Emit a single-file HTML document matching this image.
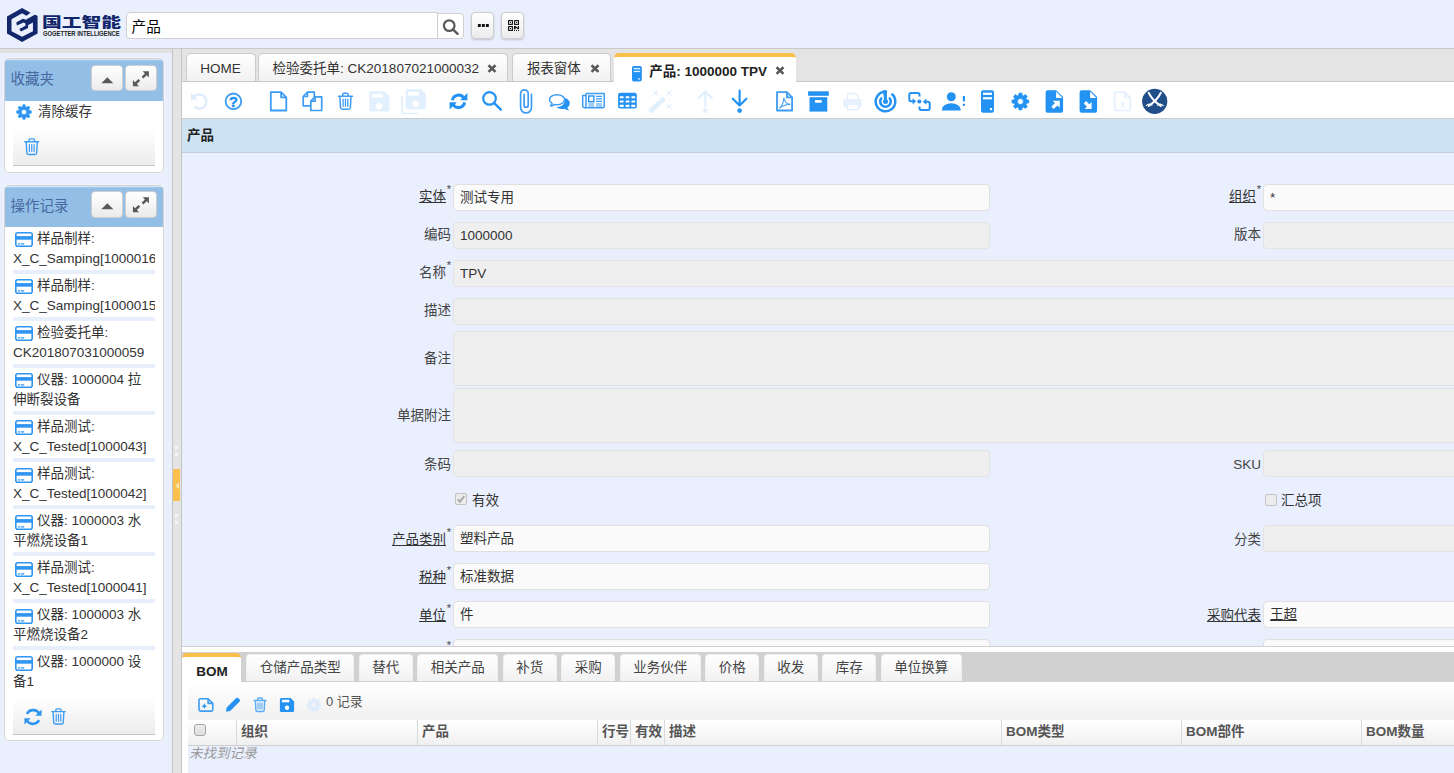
<!DOCTYPE html>
<html lang="zh-CN">
<head>
<meta charset="utf-8">
<title>产品: 1000000 TPV</title>
<style>
*{box-sizing:border-box;margin:0;padding:0}
html,body{width:1454px;height:773px;overflow:hidden}
body{position:relative;background:#e9effd;font-family:"Liberation Sans","Noto Sans CJK SC",sans-serif;font-size:13.5px;color:#333}
.abs{position:absolute}
svg{display:block;overflow:visible}
/* ---------- header ---------- */
#hdr{position:absolute;left:0;top:0;width:1454px;height:49px;background:#e9effd;border-bottom:1px solid #c9c9c9}
#logo{position:absolute;left:6px;top:7px}
#logotxt{position:absolute;left:41.6px;top:12.1px;font-weight:900;font-size:13.2px;line-height:20px;color:#12276b;white-space:nowrap;font-family:"Noto Sans CJK SC","Liberation Sans",sans-serif;transform:scaleX(1.5);transform-origin:0 0}
#logosub{position:absolute;left:43.4px;top:29.5px;font-weight:bold;font-size:7px;line-height:8px;color:#222;white-space:nowrap;transform:scaleX(.828);transform-origin:0 0}
#srch{position:absolute;left:126px;top:12px;width:312px;height:27px;background:#fff;border:1px solid #cfcfcf;border-radius:4px 0 0 4px;font-size:14.6px;line-height:28px;padding-left:4.6px;color:#000;overflow:hidden}
#srchbtn{position:absolute;left:437px;top:13px;width:27px;height:26px;background:#fff;border:1px solid #cfcfcf;border-radius:0 4px 4px 0}
.hbtn{position:absolute;top:12px;width:23.500px;height:27px;border:1px solid #cdcdcd;border-radius:4px;background:linear-gradient(#fff,#ebebeb);box-shadow:0 1px 2px rgba(0,0,0,.18)}
/* ---------- left column ---------- */
#lefttop{position:absolute;left:0;top:49px;width:172px;height:4px;background:#e1e1e1}
#split{position:absolute;left:172px;top:49px;width:9px;height:724px;background:#e4e4e4;border-left:1px solid #c4c4c4}
#splith{position:absolute;left:173px;top:468.7px;width:7px;height:32px;background:#fbc04c}
.panel{position:absolute;left:4px;width:160px;background:#fff;border:1px solid #d3d3d3;border-radius:5px;box-shadow:0 0 0 1px rgba(255,255,255,.3)}
.phead{position:absolute;left:0;top:.3px;width:158px;height:41.6px;background:linear-gradient(#eef4fb 0,#93bfe7 1.8px);border-radius:4px 4px 0 0}
.ptitle{position:absolute;left:5.6px;top:8.7px;font-size:14.5px;line-height:22px;color:#46689f;white-space:nowrap}
.pbtn{position:absolute;top:5.5px;width:31.5px;height:26.6px;border:1px solid #cfcfcf;border-radius:4px;background:linear-gradient(#fff,#ebebeb)}
.pfoot{position:absolute;left:8px;width:142px;height:37px;background:linear-gradient(#fff,#ececec);border-bottom:1px solid #c6c6c6}
.item{position:absolute;left:8px;width:142px;height:45.300px;font-size:13.500px;line-height:20px;color:#333;white-space:nowrap;overflow:hidden;border-bottom:4.800px solid #e7eefc}
.item svg{position:absolute;left:2px;top:3.7px}
.item span{padding-left:24px}
/* ---------- main ---------- */
#tabbar{position:absolute;left:181px;top:49px;width:1273px;height:33px;background:#e4e4e4;border-bottom:1px solid #c9c9c9}
.tab{position:absolute;top:4px;height:28px;border:1px solid #cbcbcb;border-bottom:none;border-radius:5px 5px 0 0;background:linear-gradient(#fff,#f1f1f1);font-size:13.5px;line-height:29px;padding-left:13px;white-space:nowrap;color:#333}
.tab .x{position:absolute;top:10.300px;right:9.800px}
.tab.act{top:4px;height:30px;border-radius:5px 5px 0 0;background:#fff;border:none;border-top:4.500px solid #fbc04c;font-weight:bold;line-height:29.500px;color:#222}
.tab.act .x{top:9.300px;right:10.900px}
#tb{position:absolute;left:182px;top:82px;width:1272px;height:37px;background:#fff;border-bottom:1px solid #cbcbcb}
#tb svg{position:absolute}
#ttl{position:absolute;left:182px;top:119px;width:1272px;height:34px;background:#cde3f4;border-bottom:1px solid #c2cfdb;font-weight:bold;font-size:13.5px;line-height:34px;padding-left:5px;color:#222}
#mainl{position:absolute;left:181px;top:49px;width:1px;height:724px;background:#c6c6c6}
#form{position:absolute;left:182px;top:153px;width:1272px;height:493px;background:#e9effd;overflow:hidden}
.lb{position:absolute;height:26px;line-height:26px;font-size:13.5px;color:#444;text-align:right;white-space:nowrap}
.lb u{text-decoration:underline;color:#333}
.lb sup{position:absolute;right:-5px;top:-8px;font-size:11px}
.in{position:absolute;height:27px;border:1px solid #e0e0e0;border-radius:4px;background:#fafafa;font-size:13.5px;line-height:25px;padding-left:6px;color:#333;white-space:nowrap}
.in.ro{background:#efefef;border-color:#e3e3e3}
.ck{position:absolute;width:12px;height:12px;border:1px solid #c4c4c4;border-radius:2px;background:#ececec}
.ckl{position:absolute;font-size:13.5px;line-height:20px;color:#333}
/* ---------- bottom ---------- */
#hs1{position:absolute;left:182px;top:646px;width:1272px;height:1.4px;background:#cfcfcf}
#hs2{position:absolute;left:182px;top:647.4px;width:1272px;height:4.6px;background:#fff}
#btabs{position:absolute;left:182px;top:652px;width:1272px;height:29.500px;background:#d1d1d1}
.bt{position:absolute;top:2px;height:26.600px;border:1px solid #f0f0f0;border-bottom:none;border-radius:4px 4px 0 0;background:linear-gradient(#fff,#f1f1f1);font-size:13.5px;line-height:26px;text-align:center;white-space:nowrap;color:#444}
.bt.act{top:.5px;height:31px;background:#fff;border:none;border-radius:5px 5px 0 0;border-top:4px solid #fbc04c;font-weight:bold;color:#222;line-height:30px}
#btb{position:absolute;left:182px;top:682px;width:1272px;height:37px;background:linear-gradient(#fff,#f0f0f0)}
#btb svg{position:absolute}
#ghead{position:absolute;left:188px;top:719px;width:1266px;height:27px;background:linear-gradient(#fff,#f0f0f0);border-bottom:1px solid #cfcfcf;border-top:1px solid #f3f3f3}
.gc{position:absolute;top:0;height:25px;border-left:1px solid #d9d9d9;font-weight:bold;font-size:13.5px;line-height:24px;padding-left:4px;color:#555;white-space:nowrap}
#gbody{position:absolute;left:188px;top:746px;width:1266px;height:27px;background:#e9effd;font-style:italic;font-size:13.5px;line-height:15px;color:#999;padding-left:1px}
#gleft{position:absolute;left:182px;top:682px;width:6px;height:91px;background:#fff}
</style>
</head>
<body>
<!-- HEADER -->
<div id="hdr">
  <svg id="logo" style="position:absolute;left:2px;top:4px" width="44" height="42" viewBox="0 0 810 773"><polygon fill="#12276b" points="525,160 370,72 92,230 92,545 370,700 655,545 655,215 600,200 440,290 385,272 262,340 275,398 395,340 432,360 432,400 318,462 350,505 480,440 482,388 570,340 570,500 370,605 175,500 175,280 370,170 450,215"/></svg>
  <div id="logotxt">国工智能</div>
  <div id="logosub">GOGETTER INTELLIGENCE</div>
  <div id="srch">产品</div>
  <div id="srchbtn"><svg width="25" height="24" viewBox="0 0 25 24" style="position:absolute;left:0;top:0"><circle cx="11.2" cy="11.6" r="5.3" fill="none" stroke="#595959" stroke-width="2.2"/><path d="M15.2 15.6L19.6 19.8" stroke="#595959" stroke-width="2.4" stroke-linecap="round"/></svg></div>
  <div class="hbtn" style="left:470.800px"><svg width="21" height="25" viewBox="0 0 21 25" style="position:absolute;left:0;top:0"><rect x="5.9" y="11" width="2.9" height="3" fill="#111"/><rect x="9.9" y="11" width="2.9" height="3" fill="#111"/><rect x="13.9" y="11" width="2.9" height="3" fill="#111"/></svg></div>
  <div class="hbtn" style="left:500.800px"><svg width="21" height="25" viewBox="0 0 21 25" style="position:absolute;left:0;top:0"><g fill="none" stroke="#111" stroke-width="1.1"><rect x="6.6" y="7.6" width="3.8" height="3.8"/><rect x="12.6" y="7.6" width="3.8" height="3.8"/><rect x="6.6" y="13.6" width="3.8" height="3.8"/></g><g fill="#111"><rect x="8" y="9" width="1" height="1"/><rect x="14" y="9" width="1" height="1"/><rect x="8" y="15" width="1" height="1"/><path d="M12 13h1.6l2.2 2V13H17v3.2h-1.3l-2-1.8v1.8H12zM12 17h1v1h-1zM14 17h1v1h-1zM16 17h1v1h-1z"/></g></svg></div>
</div>
<!-- LEFT -->
<div id="lefttop"></div>
<div id="split"></div><div id="splith"><svg width="7" height="32" viewBox="0 0 7 32"><path d="M6 13.200L2 16.700L6 20.200Z" fill="#fde3ac"/></svg></div>
<div class="abs" style="left:175.400px;top:446px;width:3px;height:10px;border-left:3px dotted #f4f4f4"></div><div class="abs" style="left:175.400px;top:514px;width:3px;height:10px;border-left:3px dotted #f4f4f4"></div>
<div class="panel" id="p1" style="top:58px;height:115px">
  <div class="phead"><div class="ptitle">收藏夹</div><div class="pbtn" style="left:86px"><svg width="30" height="25" viewBox="0 0 30 25" style="position:absolute;left:0;top:0"><path d="M9.300 17.200L15.300 11.200L21.300 17.200Z" fill="#595959"/></svg></div><div class="pbtn" style="left:120px"><svg width="30" height="25" viewBox="0 0 30 25" style="position:absolute;left:0;top:0"><g fill="#595959"><path d="M22.900 5.300v6.200l-2.200-2.200-3.300 3.300-1.800-1.800 3.300-3.300-2.200-2.200zM6.900 20.300v-6.200l2.200 2.200 3.300-3.300 1.800 1.800-3.300 3.300 2.200 2.200z"/></g></svg></div></div>
  <svg style="position:absolute;left:11px;top:44.7px" width="16" height="16" viewBox="0 0 16 16"><path fill="#2f95f1" fill-rule="evenodd" stroke="#2f95f1" stroke-width=".6" stroke-linejoin="round" d="M6.51 2.60 L6.81 0.70 L9.19 0.70 L9.49 2.60 L10.76 3.13 L12.32 1.99 L14.01 3.68 L12.87 5.24 L13.40 6.51 L15.30 6.81 L15.30 9.19 L13.40 9.49 L12.87 10.76 L14.01 12.32 L12.32 14.01 L10.76 12.87 L9.49 13.40 L9.19 15.30 L6.81 15.30 L6.51 13.40 L5.24 12.87 L3.68 14.01 L1.99 12.32 L3.13 10.76 L2.60 9.49 L0.70 9.19 L0.70 6.81 L2.60 6.51 L3.13 5.24 L1.99 3.68 L3.68 1.99 L5.24 3.13Z M5.40 8.00 a2.60 2.60 0 1 0 5.20 0 a2.60 2.60 0 1 0 -5.20 0Z"/></svg>
  <div class="abs" style="left:33px;top:42.7px;font-size:13.5px;line-height:20px;color:#333;white-space:nowrap">清除缓存</div>
  <div class="pfoot" style="top:70px"><svg style="position:absolute;left:10.8px;top:8.5px" width="15.5" height="17.5" viewBox="0 0 15.5 17.5"><g fill="none" stroke="#3d9cf3" stroke-width="1.4" stroke-linecap="round" stroke-linejoin="round"><path d="M.8 3.7h13.9M5 3.5V2.2Q5 .9 6.3 .9h2.9Q10.5 .9 10.5 2.2v1.3M2.2 4l.6 10.8q.1 1.7 1.8 1.7h6.3q1.7 0 1.8-1.7L13.300 4"/><path d="M5.400 6.600v7M7.750 6.600v7M10.100 6.600v7" stroke-width="1.200"/></g></svg></div>
</div>
<div class="panel" id="p2" style="top:184.6px;height:556.4px">
  <div class="phead"><div class="ptitle">操作记录</div><div class="pbtn" style="left:86px"><svg width="30" height="25" viewBox="0 0 30 25" style="position:absolute;left:0;top:0"><path d="M9.300 17.200L15.300 11.200L21.300 17.200Z" fill="#595959"/></svg></div><div class="pbtn" style="left:120px"><svg width="30" height="25" viewBox="0 0 30 25" style="position:absolute;left:0;top:0"><g fill="#595959"><path d="M22.900 5.300v6.200l-2.200-2.200-3.300 3.300-1.800-1.800 3.300-3.300-2.200-2.200zM6.900 20.300v-6.200l2.200 2.200 3.300-3.300 1.800 1.800-3.300 3.300 2.200 2.200z"/></g></svg></div></div>
  <div class="item" style="top:43.00px"><svg width="18" height="15" viewBox="0 0 18 15"><rect x=".8" y=".8" width="16.4" height="13.4" rx="2" fill="none" stroke="#2f95f1" stroke-width="1.6"/><rect x="1" y="4.100" width="16" height="3.600" fill="#2f95f1"/><rect x="3" y="11" width="2.200" height="1.700" fill="#2f95f1" opacity=".75"/><rect x="6" y="11" width="3.200" height="1.700" fill="#2f95f1" opacity=".75"/></svg><span>样品制样:</span><br>X_C_Samping[1000016]</div>
  <div class="item" style="top:90.05px"><svg width="18" height="15" viewBox="0 0 18 15"><rect x=".8" y=".8" width="16.4" height="13.4" rx="2" fill="none" stroke="#2f95f1" stroke-width="1.6"/><rect x="1" y="4.100" width="16" height="3.600" fill="#2f95f1"/><rect x="3" y="11" width="2.200" height="1.700" fill="#2f95f1" opacity=".75"/><rect x="6" y="11" width="3.200" height="1.700" fill="#2f95f1" opacity=".75"/></svg><span>样品制样:</span><br>X_C_Samping[1000015]</div>
  <div class="item" style="top:137.10px"><svg width="18" height="15" viewBox="0 0 18 15"><rect x=".8" y=".8" width="16.4" height="13.4" rx="2" fill="none" stroke="#2f95f1" stroke-width="1.6"/><rect x="1" y="4.100" width="16" height="3.600" fill="#2f95f1"/><rect x="3" y="11" width="2.200" height="1.700" fill="#2f95f1" opacity=".75"/><rect x="6" y="11" width="3.200" height="1.700" fill="#2f95f1" opacity=".75"/></svg><span>检验委托单:</span><br>CK201807031000059</div>
  <div class="item" style="top:184.15px"><svg width="18" height="15" viewBox="0 0 18 15"><rect x=".8" y=".8" width="16.4" height="13.4" rx="2" fill="none" stroke="#2f95f1" stroke-width="1.6"/><rect x="1" y="4.100" width="16" height="3.600" fill="#2f95f1"/><rect x="3" y="11" width="2.200" height="1.700" fill="#2f95f1" opacity=".75"/><rect x="6" y="11" width="3.200" height="1.700" fill="#2f95f1" opacity=".75"/></svg><span>仪器: 1000004 拉</span><br>伸断裂设备</div>
  <div class="item" style="top:231.20px"><svg width="18" height="15" viewBox="0 0 18 15"><rect x=".8" y=".8" width="16.4" height="13.4" rx="2" fill="none" stroke="#2f95f1" stroke-width="1.6"/><rect x="1" y="4.100" width="16" height="3.600" fill="#2f95f1"/><rect x="3" y="11" width="2.200" height="1.700" fill="#2f95f1" opacity=".75"/><rect x="6" y="11" width="3.200" height="1.700" fill="#2f95f1" opacity=".75"/></svg><span>样品测试:</span><br>X_C_Tested[1000043]</div>
  <div class="item" style="top:278.25px"><svg width="18" height="15" viewBox="0 0 18 15"><rect x=".8" y=".8" width="16.4" height="13.4" rx="2" fill="none" stroke="#2f95f1" stroke-width="1.6"/><rect x="1" y="4.100" width="16" height="3.600" fill="#2f95f1"/><rect x="3" y="11" width="2.200" height="1.700" fill="#2f95f1" opacity=".75"/><rect x="6" y="11" width="3.200" height="1.700" fill="#2f95f1" opacity=".75"/></svg><span>样品测试:</span><br>X_C_Tested[1000042]</div>
  <div class="item" style="top:325.30px"><svg width="18" height="15" viewBox="0 0 18 15"><rect x=".8" y=".8" width="16.4" height="13.4" rx="2" fill="none" stroke="#2f95f1" stroke-width="1.6"/><rect x="1" y="4.100" width="16" height="3.600" fill="#2f95f1"/><rect x="3" y="11" width="2.200" height="1.700" fill="#2f95f1" opacity=".75"/><rect x="6" y="11" width="3.200" height="1.700" fill="#2f95f1" opacity=".75"/></svg><span>仪器: 1000003 水</span><br>平燃烧设备1</div>
  <div class="item" style="top:372.35px"><svg width="18" height="15" viewBox="0 0 18 15"><rect x=".8" y=".8" width="16.4" height="13.4" rx="2" fill="none" stroke="#2f95f1" stroke-width="1.6"/><rect x="1" y="4.100" width="16" height="3.600" fill="#2f95f1"/><rect x="3" y="11" width="2.200" height="1.700" fill="#2f95f1" opacity=".75"/><rect x="6" y="11" width="3.200" height="1.700" fill="#2f95f1" opacity=".75"/></svg><span>样品测试:</span><br>X_C_Tested[1000041]</div>
  <div class="item" style="top:419.40px"><svg width="18" height="15" viewBox="0 0 18 15"><rect x=".8" y=".8" width="16.4" height="13.4" rx="2" fill="none" stroke="#2f95f1" stroke-width="1.6"/><rect x="1" y="4.100" width="16" height="3.600" fill="#2f95f1"/><rect x="3" y="11" width="2.200" height="1.700" fill="#2f95f1" opacity=".75"/><rect x="6" y="11" width="3.200" height="1.700" fill="#2f95f1" opacity=".75"/></svg><span>仪器: 1000003 水</span><br>平燃烧设备2</div>
  <div class="item" style="top:466.45px;border-bottom-color:transparent"><svg width="18" height="15" viewBox="0 0 18 15"><rect x=".8" y=".8" width="16.4" height="13.4" rx="2" fill="none" stroke="#2f95f1" stroke-width="1.6"/><rect x="1" y="4.100" width="16" height="3.600" fill="#2f95f1"/><rect x="3" y="11" width="2.200" height="1.700" fill="#2f95f1" opacity=".75"/><rect x="6" y="11" width="3.200" height="1.700" fill="#2f95f1" opacity=".75"/></svg><span>仪器: 1000000 设</span><br>备1</div>
  <div class="pfoot" style="top:512.5px"><svg style="position:absolute;left:9.5px;top:8.5px" width="20" height="20" viewBox="0 0 20 20"><g fill="none" stroke="#2f95f1" stroke-width="2.700"><path d="M16.500 7.200A7 7 0 0 0 4 6.800"/><path d="M3.500 12.800A7 7 0 0 0 16 13.200"/></g><path fill="#2f95f1" d="M18.600 2.600v6.200h-6.200zM1.400 17.400v-6.200h6.200z"/></svg><svg style="position:absolute;left:38.2px;top:9.7px" width="15" height="17" viewBox="0 0 15.5 17.5"><g fill="none" stroke="#3d9cf3" stroke-width="1.4" stroke-linecap="round" stroke-linejoin="round"><path d="M.8 3.7h13.9M5 3.5V2.2Q5 .9 6.3 .9h2.9Q10.5 .9 10.5 2.2v1.3M2.2 4l.6 10.8q.1 1.7 1.8 1.7h6.3q1.7 0 1.8-1.7L13.300 4"/><path d="M5.400 6.600v7M7.750 6.600v7M10.100 6.600v7" stroke-width="1.200"/></g></svg></div>
</div>
<!-- MAIN TABS -->
<div id="tabbar">
  <div class="tab" style="left:5.2px;width:69.4px">HOME</div>
  <div class="tab" style="left:76.8px;width:250.2px;padding-left:13.8px">检验委托单: CK201807021000032<svg class="x" width="10" height="9.200" viewBox="0 0 9.3 8.6"><path d="M1.4 1.2L7.900 7.400M7.900 1.200L1.400 7.400" stroke="#5a5a5a" stroke-width="2.500" fill="none"/></svg></div>
  <div class="tab" style="left:331.2px;width:98.7px;padding-left:13.7px">报表窗体<svg class="x" width="10" height="9.200" viewBox="0 0 9.3 8.6"><path d="M1.4 1.2L7.900 7.400M7.900 1.200L1.400 7.400" stroke="#5a5a5a" stroke-width="2.500" fill="none"/></svg></div>
  <div class="tab act" style="left:432.700px;width:182.400px;padding-left:35.600px"><svg style="position:absolute;left:18.400px;top:9px" width="9.800" height="15.500" viewBox="0 0 9.800 15.500"><rect x="0" y="0" width="9.800" height="15.500" rx="1.800" fill="#2492f2"/><rect x="1.700" y="1.900" width="6.400" height="1.400" fill="#fff" opacity=".85"/><rect x="1.700" y="4.800" width="6.400" height="1.300" fill="#fff" opacity=".85"/><rect x="6.200" y="12" width="1.600" height="1.600" fill="#fff" opacity=".85"/></svg>产品: 1000000 TPV<svg class="x" width="10" height="9.200" viewBox="0 0 9.3 8.6"><path d="M1.4 1.2L7.900 7.400M7.900 1.200L1.400 7.400" stroke="#5a5a5a" stroke-width="2.500" fill="none"/></svg></div>
</div>
<div id="mainl"></div>
<div id="tb"><svg width="1272" height="37" viewBox="0 0 1272 37" style="left:0;top:-1px">
<g fill="none" stroke="#dcebfc" stroke-width="2.2"><path d="M12.6 15.2A7.1 7.1 0 1 1 12.2 25.6"/></g><path d="M9 11.6v7h7z" fill="#dcebfc"/>
<circle cx="51.4" cy="20.3" r="7.8" fill="none" stroke="#3d9cf3" stroke-width="1.8"/><text x="51.4" y="25.6" font-family="Liberation Sans,sans-serif" font-weight="bold" font-size="14.5" text-anchor="middle" fill="#2492f2" stroke="#2492f2" stroke-width=".5">?</text>
<g fill="none" stroke="#3d9cf3" stroke-width="1.8" stroke-linejoin="round"><path d="M88.8 11.2h10.3l5.200 5.200v13.1h-15.500z"/><path d="M99.1 11.2v5.200h5.200"/></g>
<g fill="none" stroke="#3d9cf3" stroke-width="1.7" stroke-linejoin="round"><path d="M121.2 15.5l4.300-4.300h6.800v13.600h-11.100z"/><path d="M125.500 11.2v4.300h-4.300"/><path fill="#fff" d="M128.8 20.2l4.300-4.300h6.600v13.600h-10.900z"/><path d="M133.100 15.900v4.300h-4.300"/></g>
<g transform="translate(155.7,11.4) scale(1,1.02)" fill="none" stroke="#3d9cf3" stroke-width="1.5" stroke-linecap="round" stroke-linejoin="round"><path d="M.8 3.700h13.900M5 3.500V2.200Q5 .9 6.300 .9h2.900Q10.500 .9 10.500 2.200v1.300M2.200 4l.6 10.800q.1 1.700 1.800 1.700h6.300q1.700 0 1.800-1.700L13.300 4"/><path d="M5.400 6.600v7M7.750 6.600v7M10.100 6.600v7" stroke-width="1.3"/></g>
<path fill="#e2effd" d="M189.300 10.300h13.200l5 5v13.300q0 2-2 2h-16.200q-2 0-2-2v-16.300q0-2 2-2z"/><rect x="189.800" y="12.900" width="11.100" height="3.700" fill="#fff"/><circle cx="197.200" cy="25.300" r="3.200" fill="#fff"/>
<path fill="none" stroke="#e2effd" stroke-width="1.7" d="M220 15v15.600q0 1.900 1.900 1.900h15"/><path fill="#e2effd" d="M225.700 8.100h13.200l5 5v13.100q0 2-2 2h-16.200q-2 0-2-2v-16.100q0-2 2-2z"/><rect x="226" y="10.800" width="10.900" height="3.800" fill="#fff"/><circle cx="233.600" cy="22.800" r="3.200" fill="#fff"/>
<g fill="none" stroke="#2492f2" stroke-width="3"><path d="M270.39 19.22A6.2 6.2 0 0 1 281.97 17.39"/><path d="M282.61 21.38A6.2 6.2 0 0 1 271.03 23.21"/></g><path fill="#2492f2" d="M285.400 12v7.300h-7.300zM267.600 28.600v-7.300h7.300z"/>
<circle cx="307.500" cy="17.400" r="6.300" fill="none" stroke="#2492f2" stroke-width="2.2"/><path d="M312.300 22.200l6.500 6.500" stroke="#2492f2" stroke-width="2.4" stroke-linecap="round"/>
<path fill="none" stroke="#3d9cf3" stroke-width="1.700" stroke-linecap="round" d="M349.500 13.300V26.450A5.450 5.450 0 0 1 338.600 26.450V12.600A3.800 3.800 0 0 1 346.200 12.600V24.150A2.050 2.050 0 0 1 342.100 24.150V13.700"/>
<path fill="#2492f2" d="M383.300 16.800Q387.800 19 387.800 22.300Q387.800 24.800 385.300 26.500Q385.800 28.200 387.300 29.300Q384.500 29.300 382.600 27.700Q377.500 28.500 374.300 26.300Q383.500 25.800 383.300 16.800z"/><path fill="#fff" stroke="#3d9cf3" stroke-width="1.500" stroke-linejoin="round" d="M375 13.700c4.300 0 7.500 2.200 7.500 5s-3.200 5-7.500 5q-1.300 0-2.400-.3q-1.600 1.500-4.100 1.700q1.300-1.300 1.500-2.900q-2.500-1.400-2.500-3.500c0-2.800 3.200-5 7.500-5z"/>
<g fill="none" stroke="#3d9cf3" stroke-width="1.500" stroke-linejoin="round"><path d="M404 12.400h18.200v13.200q0 1.200-1.200 1.200h-18.600q-1.700 0-1.700-1.700v-10.600h3.300"/><path d="M404 12.400v12.600q0 1.800-1.600 1.800"/></g><rect x="406.700" y="15" width="5.200" height="5.700" fill="none" stroke="#2492f2" stroke-width="1.400"/><g stroke="#3d9cf3" stroke-width="1.100"><path d="M414 15.400h6M414 17.900h6M414 20.400h6M406.300 23h5.800M414 23h6M406.300 25h5.800M414 25h6"/></g>
<rect x="436.100" y="11.700" width="18.700" height="15.900" rx="2" fill="#2492f2"/><g fill="#fff"><rect x="437.8" y="15.2" width="3.800" height="2.100" rx=".5"/><rect x="437.8" y="19.5" width="3.800" height="2.100" rx=".5"/><rect x="437.8" y="23.8" width="3.800" height="2.100" rx=".5"/><rect x="443.6" y="15.2" width="3.800" height="2.100" rx=".5"/><rect x="443.6" y="19.5" width="3.800" height="2.100" rx=".5"/><rect x="443.6" y="23.8" width="3.800" height="2.100" rx=".5"/><rect x="449.4" y="15.2" width="3.800" height="2.100" rx=".5"/><rect x="449.4" y="19.5" width="3.800" height="2.100" rx=".5"/><rect x="449.4" y="23.8" width="3.800" height="2.100" rx=".5"/></g>
<path d="M469.300 29.300L480.700 18.700" stroke="#e2effd" stroke-width="5" stroke-linecap="round" fill="none"/><path fill="#e2effd" d="M470.3 8.7L473.4 10.700000000000001L476.5 8.7L474.5 11.8L476.5 14.9L473.4 12.9L470.3 14.9L472.29999999999995 11.8zM483.9 8.7L487 10.700000000000001L490.1 8.7L488.1 11.8L490.1 14.9L487 12.9L483.9 14.9L485.9 11.8zM483.9 22.3L487 24.299999999999997L490.1 22.3L488.1 25.4L490.1 28.5L487 26.5L483.9 28.5L485.9 25.4z"/>
<g fill="none" stroke="#e2effd" stroke-width="2.200" stroke-linecap="round" stroke-linejoin="round"><path d="M523.300 10.500V25M516.500 17.300L523.300 10.500L530.100 17.300"/></g><circle cx="523.300" cy="29.600" r="2.300" fill="#e2effd"/>
<g fill="none" stroke="#2492f2" stroke-width="2.200" stroke-linecap="round" stroke-linejoin="round"><path d="M557.600 9.700V24M550.800 17.700L557.600 24.500L564.400 17.700"/></g><circle cx="557.600" cy="29.600" r="2.300" fill="#2492f2"/>
<g fill="none" stroke="#3d9cf3" stroke-width="1.800" stroke-linejoin="round"><path d="M595 11.200h9.900l5.200 5.200v13.100h-15.100z"/><path d="M604.900 11.200v5.200h5.200"/></g><path fill="none" stroke="#3d9cf3" stroke-width="1.100" d="M597.300 27.300q4.200-3.500 4.600-10.500q.6 5.600 6.400 6.700q-6.300-.2-11 3.800z"/>
<rect x="626.100" y="10.300" width="20.700" height="4.500" fill="#2492f2"/><rect x="627.500" y="16.200" width="17.800" height="14.400" fill="#2492f2"/><rect x="632.900" y="19.100" width="7" height="2.700" rx="1" fill="#fff"/>
<path fill="none" stroke="#e2effd" stroke-width="1.500" d="M665.600 18.500v-6h8l2.700 2.700v3.300"/><rect x="661.300" y="18" width="18.500" height="8.600" rx="2" fill="#e6f1fd"/><rect x="665.600" y="23.300" width="10.700" height="5.400" fill="#fff" stroke="#e2effd" stroke-width="1.400"/>
<g fill="none" stroke="#2492f2" stroke-width="2.500"><path d="M709.53 12.78A9.800 9.800 0 1 1 703.50 10.70"/><path d="M707.05 16.56A5.300 5.300 0 1 1 699.95 16.56"/></g><path d="M700.900 9.300h4.200l-.4 11.200h-2.400z" fill="#2492f2"/><circle cx="703.5" cy="20.5" r="2.500" fill="#2492f2"/>
<g fill="none" stroke="#2492f2" stroke-width="2" stroke-linejoin="round"><path d="M737.500 15.500v-1.700q0-1.800-1.800-1.800h-6.600q-1.800 0-1.800 1.800v4.700q0 1.800 1.800 1.800h2"/><path d="M737.500 25.500v1.700q0 1.800 1.800 1.800h6.600q1.800 0 1.800-1.800v-4.700q0-1.800-1.800-1.800h-2"/></g><path fill="#2492f2" d="M730.600 17.200l3.600 3.100l-3.600 3.100zM744.400 17.600l-3.600 3.100l3.600 3.100z"/><circle cx="737.300" cy="20.500" r="2.100" fill="#2492f2"/>
<circle cx="769.300" cy="15.800" r="4.500" fill="#2492f2"/><path fill="#2492f2" d="M760 29.600v-1.300a9.300 6 0 0 1 18.600 0v1.300z"/><rect x="780.800" y="15" width="2.200" height="5.300" fill="#2492f2"/><rect x="780.800" y="22.800" width="2.200" height="2.100" fill="#2492f2"/>
<rect x="799" y="9.200" width="13" height="22.500" rx="2" fill="#2492f2"/><g fill="#fff"><rect x="801" y="11.700" width="9" height="2.200"/><rect x="801" y="16.200" width="9" height="2.100"/><rect x="808" y="27" width="2.200" height="2.200"/></g>
<path fill="#2492f2" fill-rule="evenodd" stroke="#2492f2" stroke-width=".8" stroke-linejoin="round" d="M836.69 14.33 L837.03 12.11 L839.77 12.11 L840.11 14.33 L841.55 14.93 L843.36 13.60 L845.30 15.54 L843.97 17.35 L844.57 18.79 L846.79 19.13 L846.79 21.87 L844.57 22.21 L843.97 23.65 L845.30 25.46 L843.36 27.40 L841.55 26.07 L840.11 26.67 L839.77 28.89 L837.03 28.89 L836.69 26.67 L835.25 26.07 L833.44 27.40 L831.50 25.46 L832.83 23.65 L832.23 22.21 L830.01 21.87 L830.01 19.13 L832.23 18.79 L832.83 17.35 L831.50 15.54 L833.44 13.60 L835.25 14.93Z M835.40 20.50 a3.00 3.00 0 1 0 6.00 0 a3.00 3.00 0 1 0 -6.00 0Z"/>
<path fill="#2492f2" d="M865.6 9.200h8.600l6.900 6.900v13.600q0 2-2 2h-13.500q-2 0-2-2v-18.500q0-2 2-2z"/><path fill="#fff" d="M874.1 10.600v6.300h6.300z"/><path fill="#fff" d="M877.700 19.700v7l-2.300-2.300l-3.700 3.700l-2.400-2.400l3.700-3.700l-2.300-2.300z"/>
<path fill="#2492f2" d="M899.6 9.200h8.600l6.900 6.900v13.600q0 2-2 2h-13.500q-2 0-2-2v-18.500q0-2 2-2z"/><path fill="#fff" d="M908.1 10.600v6.300h6.300z"/><path fill="#fff" d="M909.600 28v-7l-2.300 2.300l-3.200-3.200l-2.400 2.400l3.200 3.200l-2.300 2.300z"/>
<g fill="none" stroke="#e2effd" stroke-width="1.600" stroke-linejoin="round"><path d="M932.700 11.200h10.200l5.300 5.300v13h-15.500z"/><path d="M942.900 11.200v5.300h5.300"/></g><text x="940.500" y="27.300" font-family="Liberation Sans,sans-serif" font-size="10.500" text-anchor="middle" fill="#e2effd">x</text>
<circle cx="972.700" cy="20.300" r="12.600" fill="#1f4e89"/><g fill="none" stroke="#fff" stroke-linecap="round"><path d="M966.600 11.800Q970.500 19.500 978.800 25" stroke-width="2"/><path d="M978.900 11.800Q975 19.500 966.700 25" stroke-width="2"/><path d="M964.300 24.600q2.800-2.700 5.600-.5M981.200 24.600q-2.800-2.700-5.600-.5" stroke-width="1.200"/></g>
</svg></div>
<div id="ttl">产品</div>
<!-- FORM -->
<div id="form">
  <div class="lb" style="left:218px;top:30.5px;width:46px"><u>实体</u><sup>*</sup></div><div class="in" style="left:271px;top:31px;width:537px">测试专用</div>
  <div class="lb" style="left:218px;top:68.5px;width:51px">编码</div><div class="in ro" style="left:271px;top:69px;width:537px">1000000</div>
  <div class="lb" style="left:218px;top:106.5px;width:46px">名称<sup>*</sup></div><div class="in ro" style="left:271px;top:107px;width:1010px">TPV</div>
  <div class="lb" style="left:218px;top:144.5px;width:51px">描述</div><div class="in ro" style="left:271px;top:145px;width:1010px"></div>
  <div class="lb" style="left:218px;top:193px;width:51px">备注</div><div class="in ro" style="left:271px;top:178px;width:1010px;height:55px"></div>
  <div class="lb" style="left:168px;top:250px;width:101px">单据附注</div><div class="in ro" style="left:271px;top:235px;width:1010px;height:55px"></div>
  <div class="lb" style="left:218px;top:298.5px;width:51px">条码</div><div class="in ro" style="left:271px;top:297px;width:537px"></div>
  <div class="ck" style="left:273px;top:340px"><svg width="10" height="10" viewBox="0 0 10 10" style="position:absolute;left:0;top:0"><path d="M1.800 5.300L4 7.600L8.300 2" fill="none" stroke="#a9a9a9" stroke-width="2"/></svg></div><div class="ckl" style="left:290px;top:338px">有效</div>
  <div class="lb" style="left:168px;top:373.5px;width:96px"><u>产品类别</u><sup>*</sup></div><div class="in" style="left:271px;top:372px;width:537px">塑料产品</div>
  <div class="lb" style="left:218px;top:411.5px;width:46px"><u>税种</u><sup>*</sup></div><div class="in" style="left:271px;top:410px;width:537px">标准数据</div>
  <div class="lb" style="left:218px;top:449.5px;width:46px"><u>单位</u><sup>*</sup></div><div class="in" style="left:271px;top:448px;width:537px">件</div>
  <div class="lb" style="left:218px;top:486.5px;width:46px"><sup>*</sup></div><div class="in" style="left:271px;top:486px;width:537px"></div>
  <div class="lb" style="left:1028px;top:30.5px;width:46px"><u>组织</u><sup>*</sup></div><div class="in" style="left:1081px;top:31px;width:200px">*</div>
  <div class="lb" style="left:1028px;top:68.5px;width:51px">版本</div><div class="in ro" style="left:1081px;top:69px;width:200px"></div>
  <div class="lb" style="left:1028px;top:298.5px;width:51px">SKU</div><div class="in ro" style="left:1081px;top:297px;width:200px"></div>
  <div class="ck" style="left:1083px;top:340.500px"></div><div class="ckl" style="left:1099px;top:338px">汇总项</div>
  <div class="lb" style="left:1028px;top:373.5px;width:51px">分类</div><div class="in ro" style="left:1081px;top:372px;width:200px"></div>
  <div class="lb" style="left:978px;top:449.5px;width:101px"><u>采购代表</u></div><div class="in" style="left:1081px;top:448px;width:200px"><u>王超</u></div>
  <div class="in" style="left:1081px;top:486px;width:200px"></div>
</div>
<!-- BOTTOM -->
<div id="hs1"></div><div id="hs2"></div>
<div id="btabs">
  <div class="bt act" style="left:.4px;width:59px">BOM</div>
  <div class="bt" style="left:64px;width:108.400px">仓储产品类型</div>
  <div class="bt" style="left:176.500px;width:54.400px">替代</div>
  <div class="bt" style="left:235px;width:81.400px">相关产品</div>
  <div class="bt" style="left:320.500px;width:54.400px">补货</div>
  <div class="bt" style="left:379px;width:54.400px">采购</div>
  <div class="bt" style="left:437.500px;width:81.400px">业务伙伴</div>
  <div class="bt" style="left:523px;width:54.400px">价格</div>
  <div class="bt" style="left:581.500px;width:54.400px">收发</div>
  <div class="bt" style="left:640px;width:54.400px">库存</div>
  <div class="bt" style="left:698.500px;width:81.400px">单位换算</div>
</div>
<div id="btb"><svg width="200" height="37" viewBox="0 0 200 37" style="left:0;top:0"><g fill="none" stroke="#3d9cf3" stroke-width="1.600" stroke-linejoin="round"><path d="M18.500 16.700h7.600l4.700 4.700v6.200q0 1.500-1.500 1.500h-10.800q-1.500 0-1.500-1.500v-9.400q0-1.500 1.500-1.500z"/><path d="M26.100 16.700v4.700h4.700"/></g><path fill="#2492f2" d="M22.400 21.300l.9 2l2 .9l-2 .9l-.9 2l-.9-2l-2-.9l2-.9z"/><path fill="#2492f2" d="M43.900 29.700l.8-4.100l9.500-9.500q1-.8 2 0l1.400 1.400q.8 1 0 2l-9.500 9.500z"/><g transform="translate(71.500,15.200) scale(.845,.865)" fill="none" stroke="#5badf5" stroke-width="1.700" stroke-linecap="round" stroke-linejoin="round"><path d="M.8 3.700h13.900M5 3.500V2.200Q5 .9 6.300 .9h2.900Q10.500 .9 10.500 2.200v1.300M2.200 4l.6 10.800q.1 1.700 1.800 1.700h6.300q1.700 0 1.800-1.700L13.300 4"/><path d="M5.400 6.600v7M7.750 6.600v7M10.100 6.600v7" stroke-width="1.300"/></g><path fill="#2492f2" d="M99.400 15.900h9.200l3.500 3.500v9q0 1.500-1.500 1.500h-11.200q-1.500 0-1.500-1.500v-11q0-1.500 1.500-1.500z"/><rect x="99.900" y="17.700" width="7.400" height="2.600" fill="#fff"/><circle cx="105" cy="25.800" r="2.200" fill="#fff"/><path fill="#dfecfb" fill-rule="evenodd" stroke="#dfecfb" stroke-width=".7" stroke-linejoin="round" d="M130.39 17.89 L130.67 16.09 L132.93 16.09 L133.21 17.89 L134.41 18.39 L135.89 17.32 L137.48 18.91 L136.41 20.39 L136.91 21.59 L138.71 21.87 L138.71 24.13 L136.91 24.41 L136.41 25.61 L137.48 27.09 L135.89 28.68 L134.41 27.61 L133.21 28.11 L132.93 29.91 L130.67 29.91 L130.39 28.11 L129.19 27.61 L127.71 28.68 L126.12 27.09 L127.19 25.61 L126.69 24.41 L124.89 24.13 L124.89 21.87 L126.69 21.59 L127.19 20.39 L126.12 18.91 L127.71 17.32 L129.19 18.39Z M129.30 23.00 a2.50 2.50 0 1 0 5.00 0 a2.50 2.50 0 1 0 -5.00 0Z"/></svg><div class="abs" style="left:144px;top:11px;font-size:13px;line-height:17px;color:#555;white-space:nowrap">0 记录</div></div>
<div id="gleft"></div>
<div id="ghead">
  <div class="ck" style="left:6px;top:4.300px;background:linear-gradient(#ededed,#dedede);width:12px;height:12px;border-color:#a5a5a5;border-radius:3px"></div>
  <div class="gc" style="left:48px;width:181px">组织</div>
  <div class="gc" style="left:229px;width:180px">产品</div>
  <div class="gc" style="left:409px;width:33px">行号</div>
  <div class="gc" style="left:442px;width:34px">有效</div>
  <div class="gc" style="left:476px;width:337px">描述</div>
  <div class="gc" style="left:813px;width:180px">BOM类型</div>
  <div class="gc" style="left:993px;width:181px">BOM部件</div>
  <div class="gc" style="left:1173px;width:93px">BOM数量</div>
</div>
<div id="gbody">未找到记录</div>
</body>
</html>
